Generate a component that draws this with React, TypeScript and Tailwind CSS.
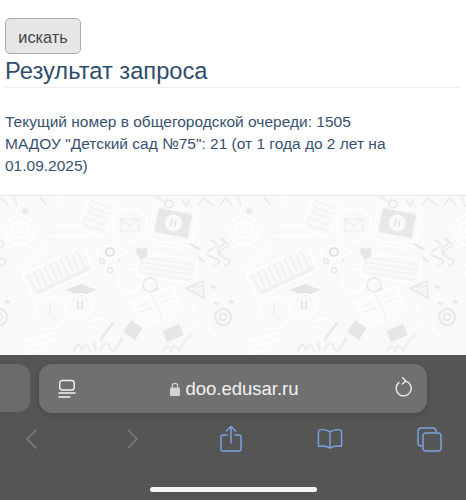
import React from 'react';

function Doodles() {
  return (
    <svg className="block h-full w-full blur-[0.7px]" viewBox="0 0 466 159" fill="none" stroke="#fefefe" strokeWidth="1.500" strokeLinecap="round" strokeLinejoin="round">
      <defs>
        <g id="tile">
          {/* monitor */}
          <g transform="rotate(11 172 34)">
            <rect x="150" y="11" width="44" height="36" rx="2" />
            <rect x="155" y="15" width="34" height="24" fill="#e7e7e7" stroke="none" />
            <circle cx="172" cy="27" r="8.500" fill="#f9f9f9" stroke="none" />
            <path d="M170 24v6M174 24v6" stroke="#e2e2e2" />
            <path d="M158 51h28" />
          </g>
          {/* keyboard */}
          <g transform="rotate(8 167 72)">
            <rect x="137" y="60" width="60" height="24" rx="2" />
            <path d="M141 65h52M141 70h52M141 75h52M141 80h52" strokeDasharray="2 1.500" stroke="#f0f0f0" strokeWidth="1.300" />
          </g>
          {/* piano */}
          <g transform="rotate(-25 58 76)">
            <rect x="24" y="63" width="68" height="26" rx="2" />
            <path d="M30 66v16M36 66v16M42 66v16M48 66v16M54 66v16M60 66v16M66 66v16M72 66v16M78 66v16M84 66v16" stroke="#eeeeee" />
            <rect x="30" y="84" width="58" height="4" fill="#f1f1f1" stroke="none" />
          </g>
          {/* envelope in circle */}
          <circle cx="130" cy="29" r="17" />
          <path d="M114 44l-3 8" />
          <rect x="121" y="23" width="18" height="12" stroke="#efefef" />
          <path d="M121 23l9 7 9-7" stroke="#efefef" />
          {/* tablet */}
          <g transform="rotate(22 97 20)">
            <rect x="83" y="2" width="28" height="36" rx="3" />
            <path d="M87 8h20M87 14h20M87 20h20M87 26h20M87 32h20" strokeDasharray="2 1.500" stroke="#f0f0f0" strokeWidth="1.300" />
          </g>
          {/* eye */}
          <path d="M94 56q16-13 32 0q-16 13-32 0z" />
          <circle cx="110" cy="56" r="4" stroke="#e2e2e2" strokeWidth="2" />
          {/* heart */}
          <path d="M142 64c-7-5-7-11-3.500-12c2-.5 3.500.5 3.500 2.500c0-2 1.500-3 3.500-2.500c3.500 1 3.500 7-3.500 12z" fill="#e6e6e6" stroke="none" />
          {/* percent */}
          <path d="M103 76l8-14" />
          <circle cx="102" cy="65" r="2.500" stroke="#e9e9e9" />
          <circle cx="110" cy="74" r="2.500" stroke="#e9e9e9" />
          <circle cx="119" cy="64" r="1.500" fill="#e9e9e9" stroke="none" />
          {/* mortar board */}
          <path d="M65 94l16-6 15 6-15 6z" fill="#e4e4e4" stroke="none" />
          <circle cx="80" cy="110" r="12" />
          <path d="M78 106v7M82 106v7" stroke="#e6e6e6" strokeWidth="2" />
          {/* magnifier */}
          <circle cx="150" cy="89" r="7" stroke="#e8e8e8" />
          <path d="M156 93l19 9" stroke="#e4e4e4" strokeWidth="2" />
          <circle cx="130" cy="85" r="12" />
          {/* cone */}
          <path d="M186 92l17-7 1 17z" stroke="#e6e6e6" />
          <path d="M191 91l13-1M191 95l13 2" stroke="#ececec" />
          {/* spiral */}
          <circle cx="223" cy="121" r="8" stroke="#e8e8e8" strokeWidth="2" />
          <circle cx="223" cy="121" r="3.500" stroke="#e8e8e8" />
          <circle cx="-1" cy="121" r="8" stroke="#e8e8e8" strokeWidth="2" />
          <circle cx="-1" cy="121" r="3.500" stroke="#e8e8e8" />
          {/* book */}
          <g transform="rotate(-24 157 111)">
            <rect x="134" y="97" width="46" height="28" rx="2" fill="#fbfbfb" />
            <path d="M157 97v28M139 103h13M139 109h13M162 103h13M162 109h13" stroke="#f2f2f2" />
          </g>
          <rect x="126" y="127" width="14" height="14" transform="rotate(32 133 134)" fill="#e6e6e6" stroke="none" />
          <rect x="164" y="131" width="18" height="12" transform="rotate(-25 173 137)" fill="#e6e6e6" stroke="none" />
          {/* circles and pencil */}
          <circle cx="50" cy="117" r="16" />
          <path d="M50 108v12l5 3" stroke="#f0f0f0" />
          <circle cx="20" cy="34" r="15" />
          <circle cx="20" cy="34" r="8" />
          <circle cx="20" cy="34" r="3" />
          <path d="M12 73l36-28M17 77l36-27" />
          <path d="M101 143l12-16" stroke="#e9e9e9" strokeWidth="2.500" />
          <circle cx="62" cy="4" r="4" />
          <path d="M50 40h36M52 30h30M55 20h20" />
          <circle cx="25" cy="15" r="3" fill="#ebebeb" stroke="none" />
          {/* squiggles */}
          <path d="M210 44q12 3 2 9q-10 5 2 9q10 3 0 8" stroke="#e9e9e9" />
          <path d="M220 42q10 3 1 8q-8 4 2 9" stroke="#e9e9e9" />
          <path d="M-3 44q12 3 2 9q-10 5 2 9q10 3 0 8" stroke="#e9e9e9" />
          <path d="M24 145l32-8M26 151l32-8M30 157l22-5" />
          <path d="M74 155q4-12 8-1q4-11 8 1M94 145l2 11M100 154q8-12 10-2q4 8 12-10" stroke="#ededed" strokeWidth="2" />
          <path d="M163 155q6-10 8 0q4-10 8 0q6-12 12-16" stroke="#ededed" strokeWidth="2" />
          {/* top row */}
          <path d="M2 2l6 8M14 1l3 9M40 1l6 8M158 1l6 5M169 4a4 4 0 1 0 .1 0M182 3l4 7 4-7M198 8l8-7M206 4l8 6M221 9l4-8" stroke="#e9e9e9" />
          <path d="M190 48l9 5M200 62l3 3M212 90l2 2M215 107l3 1M6 106h3" stroke="#e8e8e8" strokeWidth="2.500" />
          <path d="M190 118l8-12M195 125q-3 8 3 12M208 132l10 10M90 125q10-4 18 0M88 134l8-3" />
        </g>
      </defs>
      <use href="#tile" />
      <use href="#tile" x="224" />
      <use href="#tile" x="448" />
    </svg>
  );
}

export default function App() {
  return (
    <div className="flex h-[500px] w-[466px] flex-col overflow-hidden bg-white font-['Liberation_Sans',Arial,sans-serif]">
      <div className="h-[195px] shrink-0 px-[5px] pt-[18px]">
        <button className="flex h-[36px] w-[76px] items-center justify-center rounded-[5px] border border-[#adadad] bg-[#e6e6e6] pt-[2px] text-[16.300px] text-[#444]">
          искать
        </button>
        <h2 className="border-b border-[#eeeeee] pt-[2px] text-[23.700px] leading-[31px] font-normal text-[#2f4d6d]">
          Результат запроса
        </h2>
        <p className="mt-[23px] text-[15.500px] leading-[22px] text-[#37526e]">
          Текущий номер в общегородской очереди: 1505
          <br />
          МАДОУ "Детский сад №75": 21 (от 1 года до 2 лет на
          <br />
          01.09.2025)
        </p>
      </div>
      <div className="h-[160px] shrink-0 overflow-hidden border-t border-[#e8e8e8] bg-[#f9f9f9]">
        <Doodles />
      </div>
      <div className="relative flex-1 bg-[#555555]">
        <div className="flex gap-[9px] pt-[9px]">
          <div className="h-[48px] w-[30px] shrink-0 rounded-r-[12px] bg-[#6b6b6b]" />
          <div className="flex h-[49px] w-[388px] shrink-0 items-center rounded-[13px] bg-[#707070] pr-[14px] pl-[19px] shadow-[0_2px_6px_rgba(0,0,0,0.15)]">
            <svg width="18" height="20" viewBox="0 0 18 20" fill="none" stroke="#f2f2f2" strokeWidth="1.4" strokeLinecap="round">
              <rect x="1.700" y="1.500" width="14.500" height="9.500" rx="2.500" />
              <path d="M1 14h16M1 18h11" />
            </svg>
            <div className="flex flex-1 items-center justify-center gap-[5px] pr-[2px] text-[18.500px] text-[#f2f2f2]">
              <svg width="10" height="14" viewBox="0 0 10 14" fill="#d2d2d2">
                <path d="M2.300 6V4a2.700 2.700 0 0 1 5.400 0v2" fill="none" stroke="#d2d2d2" strokeWidth="1.200" />
                <rect x="0" y="5.500" width="10" height="8.500" rx="1.500" />
              </svg>
              doo.edusar.ru
            </div>
            <svg className="mb-[3px]" width="18" height="20" viewBox="0 0 18 20" fill="none" stroke="#f2f2f2" strokeWidth="1.300" strokeLinecap="round" strokeLinejoin="round">
              <path d="M10.500 4.100A7.500 7.500 0 1 1 4 5.500" />
              <path d="M7.500 0.800l3.300 3.200-3.500 3" />
            </svg>
          </div>
        </div>
        <div className="mt-[12px] flex items-center justify-between pr-[24px] pl-[19px]">
          <div className="flex w-[26px] justify-center pr-[1px]">
            <svg width="13" height="22" viewBox="0 0 13 22" fill="none" stroke="#7c7c7c" strokeWidth="1.500" strokeLinecap="round" strokeLinejoin="round">
              <path d="M11 2L2 11l9 9" />
            </svg>
          </div>
          <div className="flex w-[26px] justify-center pl-[3px]">
            <svg width="13" height="22" viewBox="0 0 13 22" fill="none" stroke="#7c7c7c" strokeWidth="1.500" strokeLinecap="round" strokeLinejoin="round">
              <path d="M2 2l9 9-9 9" />
            </svg>
          </div>
          <div className="flex w-[26px] justify-center">
            <svg width="22" height="28" viewBox="0 0 22 28" fill="none" stroke="#7aa2e0" strokeWidth="1.500" strokeLinecap="round" strokeLinejoin="round">
              <path d="M7 10H3a2 2 0 0 0-2 2v12a2 2 0 0 0 2 2h16a2 2 0 0 0 2-2V12a2 2 0 0 0-2-2h-4" />
              <path d="M11 18V2M6.500 6L11 1.500 15.500 6" />
            </svg>
          </div>
          <div className="flex w-[26px] justify-center">
            <svg width="27" height="22" viewBox="0 0 27 22" fill="none" stroke="#7aa2e0" strokeWidth="1.500" strokeLinecap="round" strokeLinejoin="round">
              <path d="M13.500 4C11 1.500 6 1 2.500 1.500C1.500 1.700 1.500 3 1.500 4V18.500C5 18 10 18 13.500 20.500C17 18 22 18 25.500 18.500V4C25.500 3 25.500 1.700 24.500 1.500C21 1 16 1.500 13.500 4zM13.500 4v16.500" />
            </svg>
          </div>
          <div className="flex w-[26px] justify-center">
            <svg width="25" height="25" viewBox="0 0 25 25" fill="none" stroke="#7aa2e0" strokeWidth="1.500" strokeLinejoin="round">
              <path d="M5 19H4a3 3 0 0 1-3-3V4a3 3 0 0 1 3-3h12a3 3 0 0 1 3 3v1" />
              <rect x="6" y="6" width="18" height="18" rx="3" />
            </svg>
          </div>
        </div>
        <div className="absolute bottom-[8px] left-[150px] h-[5px] w-[167px] rounded-full bg-[#f5f5f5]" />
      </div>
    </div>
  );
}
